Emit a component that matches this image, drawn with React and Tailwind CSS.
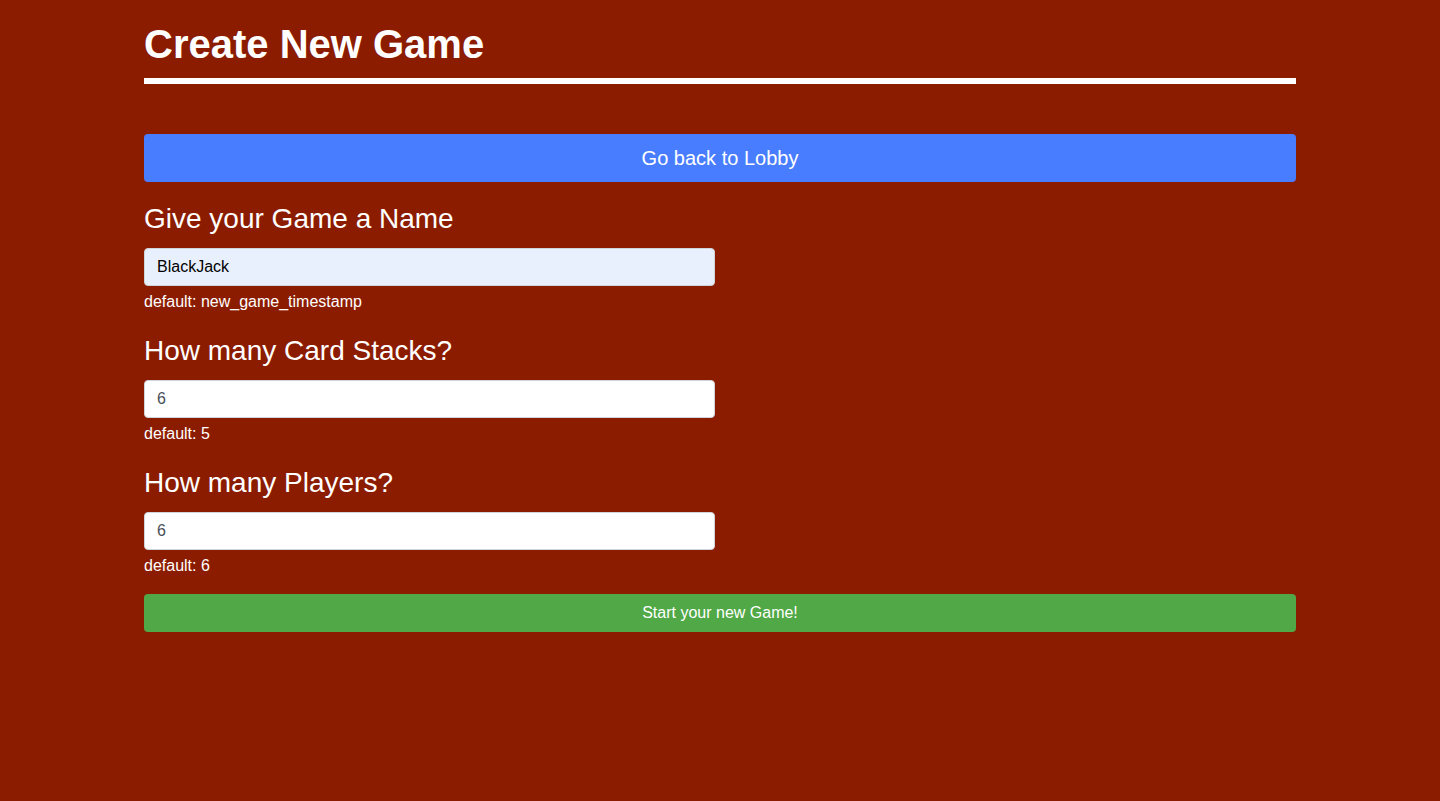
import { useState } from "react";

const Field = ({ label, value, onChange, hint, filled }) => (
  <div>
    <h2 className="mt-[21px] mb-[13px] text-[28px] leading-[32px] text-white">{label}</h2>
    <input
      type="text"
      value={value}
      onChange={(e) => onChange(e.target.value)}
      className={`block h-[38px] w-[571px] rounded-[4px] border border-[#ced4da] px-[12px] text-[16px] outline-none ${
        filled ? "bg-[#e8f0fe] text-black" : "bg-white text-[#495057]"
      }`}
    />
    <p className="mt-[4px] text-[16px] leading-[24px] text-white">{hint}</p>
  </div>
);

export default function App() {
  const [name, setName] = useState("BlackJack");
  const [stacks, setStacks] = useState("6");
  const [players, setPlayers] = useState("6");

  return (
    <div className="min-h-[801px] bg-[#8c1c00] font-['Liberation_Sans',Arial,sans-serif]">
      <div className="mx-auto w-[1152px] pt-[20px]">
        <h1 className="text-[40px] font-bold leading-[48px] text-white">Create New Game</h1>
        <div className="mt-[10px] h-[6px] bg-white" />

        <button
          type="button"
          className="mt-[50px] block h-[48px] w-full rounded-[4px] bg-[#497dff] text-[20px] text-white"
        >
          Go back to Lobby
        </button>

        <Field
          label="Give your Game a Name"
          value={name}
          onChange={setName}
          hint="default: new_game_timestamp"
          filled
        />
        <Field label="How many Card Stacks?" value={stacks} onChange={setStacks} hint="default: 5" />
        <Field label="How many Players?" value={players} onChange={setPlayers} hint="default: 6" />

        <button
          type="button"
          className="mt-[16px] block h-[38px] w-full rounded-[4px] bg-[#50a846] text-[16px] text-white"
        >
          Start your new Game!
        </button>
      </div>
    </div>
  );
}
